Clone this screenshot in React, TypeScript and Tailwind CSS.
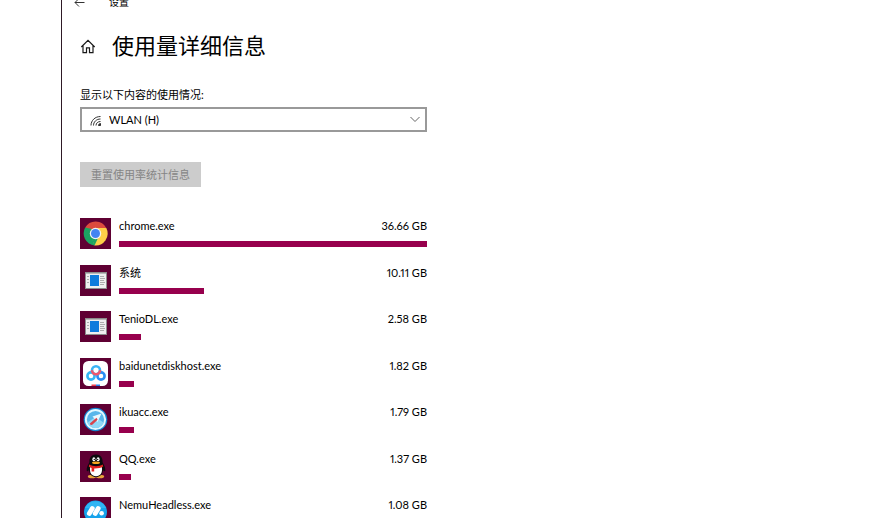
import type { ReactNode } from "react";

function ChromeIcon() {
  return (
    <svg viewBox="0 0 31 31" className="size-full" aria-hidden="true">
      <path d="M15.5 15.5 5.2 9.5A12 12 0 0 1 26.3 10Z" fill="#dd4b3e" />
      <path d="M15.5 15.5 26.3 10A12 12 0 0 1 14.5 27.4Z" fill="#fdcf48" />
      <path d="M15.5 15.5 14.5 27.4A12 12 0 0 1 5.2 9.5Z" fill="#1da362" />
      <path d="M15.5 10H26.3L20.3 18.2Z" fill="#fdcf48" />
      <path d="M20.3 18.2 14.5 27.4 12 20Z" fill="#fdcf48" />
      <path d="M10.7 18.2 5.2 9.5 12 11Z" fill="#1da362" />
      <path d="M10.7 18.3 15.5 21 17.8 20.6 14.5 27.4Z" fill="#1da362" />
      <circle cx="15.5" cy="15.5" r="5.7" fill="#f2f2f2" />
      <circle cx="15.5" cy="15.5" r="4.5" fill="#4484f2" />
    </svg>
  );
}

function WindowIcon() {
  return (
    <svg viewBox="0 0 31 31" className="size-full" aria-hidden="true">
      <rect x="5" y="7" width="22" height="17" fill="#8c8c8c" />
      <rect x="6" y="9" width="20" height="14" fill="#efefef" />
      <rect x="6" y="8" width="20" height="1" fill="#b9b9b9" />
      <rect x="10" y="10" width="9" height="11" fill="#0f7bdc" />
      <path d="M7 11.5h2M7 14.5h2M7 17.5h2M20 11.5h4M20 13.5h5M20 15.5h4M20 17.5h5M20 19.5h4" stroke="#adadad" strokeWidth="1" />
    </svg>
  );
}

function BaiduDiskIcon() {
  return (
    <svg viewBox="0 0 31 31" className="size-full" aria-hidden="true">
      <rect x="3" y="3" width="25" height="25" rx="5.5" fill="#fff" />
      <g fill="none" strokeWidth="2.6">
        <circle cx="11" cy="18" r="3.6" stroke="#35b6f5" />
        <circle cx="21" cy="18" r="3.6" stroke="#2b8df4" />
        <circle cx="16" cy="12.2" r="4" stroke="#3cb4f6" />
        <path d="M12 12.2a4 4 0 0 0 8 0" stroke="#f2566a" />
      </g>
      <path d="M11.5 26.5h4.5V28h-4.5Z" fill="#ef3f4f" />
      <path d="M16 26.5h4V28h-4Z" fill="#2680e8" />
    </svg>
  );
}

function CompassIcon() {
  return (
    <svg viewBox="0 0 31 31" className="size-full" aria-hidden="true">
      <circle cx="15.5" cy="15.5" r="11.8" fill="#1685d0" />
      <circle cx="15.5" cy="15.5" r="10.6" fill="#e2f8ff" />
      <circle cx="15.5" cy="15.5" r="8.6" fill="#58b6ea" />
      <path d="M7.5 18.5a8.6 8.6 0 0 0 16 0L15.5 13Z" fill="#8fd9f8" />
      <path d="M21.5 9.5 12.5 12.5 17.5 18Z" fill="#e9f8ff" />
      <path d="M16.5 13.8 9.8 19.6 10.8 21.2 12.6 20.4 17.6 15.8Z" fill="#d8444c" />
    </svg>
  );
}

function PenguinIcon() {
  return (
    <svg viewBox="0 0 31 31" className="size-full" aria-hidden="true">
      <ellipse cx="12" cy="25.5" rx="4.2" ry="1.8" fill="#e8a53a" />
      <ellipse cx="20" cy="25.5" rx="4.2" ry="1.8" fill="#e8a53a" />
      <path d="M16 3.5c-4.3 0-6.8 3-6.6 7.7-1.5 3-3 5.6-2.7 8.3.2 1.2 1.3 1 2.2-.5.7 4.4 3.1 7 7.1 7s6.4-2.6 7.1-7c.9 1.5 2 1.7 2.2.5.3-2.7-1.2-5.3-2.7-8.3.2-4.7-2.3-7.7-6.6-7.7Z" fill="#0b0b0d" />
      <path d="M10.2 16c-1 5.7 1.3 9.2 5.8 9.2s6.8-3.5 5.8-9.2Z" fill="#fff" />
      <ellipse cx="13.9" cy="8.3" rx="1.5" ry="2" fill="#fff" />
      <ellipse cx="18.1" cy="8.3" rx="1.5" ry="2" fill="#fff" />
      <circle cx="14.3" cy="8.4" r=".7" fill="#111" />
      <circle cx="17.7" cy="8.4" r=".7" fill="#111" />
      <ellipse cx="16" cy="11.8" rx="4" ry="1.2" fill="#f5a71e" />
      <path d="M9.2 13.6c4 2.2 9.6 2.2 13.6 0l.4 1.9c-2.5 1.5-5.5 2-9 1.9v3h-2.6v-3.4l-2.8-1.2Z" fill="#e3221f" />
    </svg>
  );
}

function NemuIcon() {
  return (
    <svg viewBox="0 0 31 31" className="size-full" aria-hidden="true">
      <circle cx="15.5" cy="15" r="11.5" fill="#16a3ec" />
      <path d="M5 11a11.5 11.5 0 0 1 21 0Z" fill="#30b5f4" />
      <g stroke="#fff" strokeLinecap="round" strokeWidth="4.8">
        <path d="M9.3 16.5 12.3 11.5" />
        <path d="M15.2 16.5 18.2 11.5" />
      </g>
      <circle cx="21.6" cy="16.3" r="2.3" fill="#fff" />
    </svg>
  );
}

type AppUsage = { name: string; gb: number; icon: ReactNode };

const apps: AppUsage[] = [
  { name: "chrome.exe", gb: 36.66, icon: <ChromeIcon /> },
  { name: "系统", gb: 10.11, icon: <WindowIcon /> },
  { name: "TenioDL.exe", gb: 2.58, icon: <WindowIcon /> },
  { name: "baidunetdiskhost.exe", gb: 1.82, icon: <BaiduDiskIcon /> },
  { name: "ikuacc.exe", gb: 1.79, icon: <CompassIcon /> },
  { name: "QQ.exe", gb: 1.37, icon: <PenguinIcon /> },
  { name: "NemuHeadless.exe", gb: 1.08, icon: <NemuIcon /> },
];

const maxUsage = apps[0].gb;

function UsageRow({ name, gb, icon }: AppUsage) {
  return (
    <li className="flex h-[31px] gap-2">
      <div className="size-[31px] shrink-0 bg-[#5f0033]">{icon}</div>
      <div className="min-w-0 flex-1">
        <div className="flex justify-between leading-4">
          <span>{name}</span>
          <span className="proportional-nums">{gb.toFixed(2)} GB</span>
        </div>
        <div className="mt-[7px] h-1.5 bg-[#97004d]" style={{ width: `${(gb / maxUsage) * 100}%` }} />
      </div>
    </li>
  );
}

export default function App() {
  return (
    <div className="h-screen overflow-hidden bg-white pl-[61px] font-[Lato,'Noto_Sans_CJK_SC',sans-serif] text-[11px] text-black">
      <div className="h-full border-l border-[#2e1a26] pl-[18px]">
        <header className="-ml-1.5 flex h-1 items-center gap-6 text-[10px] leading-4">
          <button type="button" aria-label="返回" className="shrink-0">
            <svg viewBox="0 0 11 11" className="size-[11px]" fill="none" stroke="#333" aria-hidden="true">
              <path d="M10.5 5.5H1M5 1.5 1 5.5l4 4" />
            </svg>
          </button>
          <span>设置</span>
        </header>

        <main className="w-full max-w-[347px]">
          <div className="mt-[26px] flex h-8 items-center gap-4">
            <button type="button" aria-label="主页" className="shrink-0">
              <svg viewBox="0 0 16 16" className="size-4" fill="none" stroke="#1a1a1a" strokeWidth="1.2" aria-hidden="true">
                <path d="M1.3 9 8 2.3l6.7 6.7M3 7.5v7.2h3.5V9.8h3v4.9H13V7.5" />
              </svg>
            </button>
            <h1 className="text-[22px] leading-8">使用量详细信息</h1>
          </div>

          <label htmlFor="network" className="mt-[25px] block leading-4">
            显示以下内容的使用情况:
          </label>
          <div className="relative mt-1">
            <select
              id="network"
              className="block h-[25px] w-full appearance-none border-2 border-[#999] bg-white pl-[27px] leading-4"
            >
              <option>WLAN (H)</option>
            </select>
            <svg viewBox="0 0 12 12" className="pointer-events-none absolute top-2 left-2.5 size-3" fill="none" stroke="#333" aria-hidden="true">
              <path d="M1 10.5C1 5.5 5 1.5 10.5 1.5M3.5 10.5c0-3.7 3-6.5 7-6.5M6 10.5c0-2.3 1.9-4 4.5-4" />
              <path d="M8.5 10.5c0-1.1.9-2 2-2v2Z" fill="#333" />
            </svg>
            <svg viewBox="0 0 12 12" className="pointer-events-none absolute top-1.5 right-1.5 size-3" fill="none" stroke="#666" aria-hidden="true">
              <path d="M1.5 4 6 8.5 10.5 4" />
            </svg>
          </div>

          <button type="button" disabled className="mt-[30px] h-[25px] bg-[#ccc] px-[11px] leading-4 text-[#858585]">
            重置使用率统计信息
          </button>

          <ul className="mt-[31px] flex h-[310px] flex-col justify-between">
            {apps.map((app) => (
              <UsageRow key={app.name} {...app} />
            ))}
          </ul>
        </main>
      </div>
    </div>
  );
}
